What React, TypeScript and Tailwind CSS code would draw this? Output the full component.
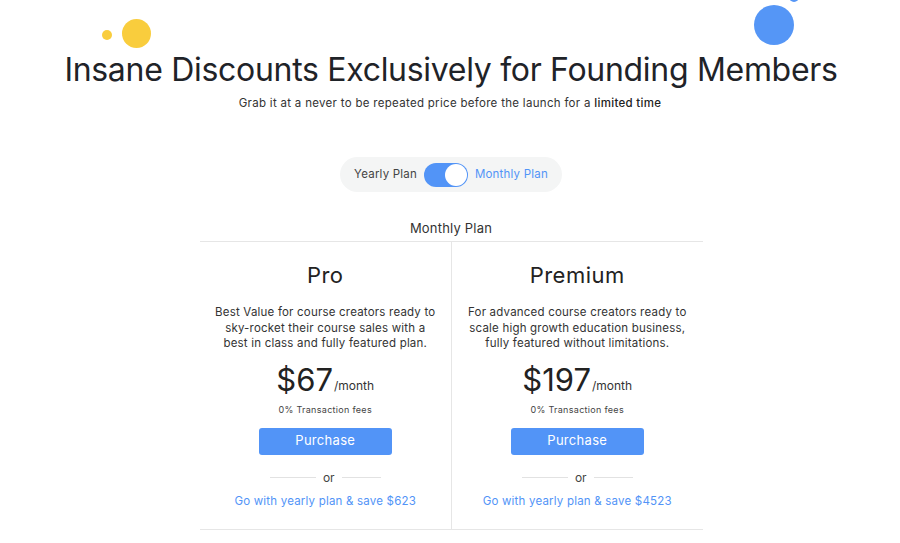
import React from "react";

const font = { fontFamily: "Inter, 'Noto Sans', sans-serif" };

function Plan({
  name,
  desc,
  price,
  save,
}: {
  name: string;
  desc: string[];
  price: string;
  save: string;
}) {
  return (
    <div className="flex flex-col items-center pt-[19px] pb-[20px]">
      <div className="text-[22px] leading-[28px] text-[#222] tracking-[0.5px]">{name}</div>
      <div className="mt-[16px] flex flex-col items-center text-[11.5px] leading-[15.5px] text-[#333] tracking-[0.2px]">
        {desc.map((d) => (
          <div key={d}>{d}</div>
        ))}
      </div>
      <div className="mt-[10px] flex items-end text-[#222] h-[36px]">
        <span className="text-[31px] leading-[36px]">{price}</span>
        <span className="text-[12px] leading-[14px] mb-[5px] ml-[1px] text-[#333]">/month</span>
      </div>
      <div className="mt-[6px] text-[9px] leading-[12px] text-[#444] tracking-[0.3px]">0% Transaction fees</div>
      <button className="mt-[12px] w-[133px] h-[27px] rounded-[3px] bg-[#5294f7] text-white text-[13px] tracking-[0.3px]">
        Purchase
      </button>
      <div className="mt-[16px] flex items-center gap-[7px] h-[14px]">
        <div className="w-[46px] h-px bg-[#e2e2e2]" />
        <span className="text-[12px] leading-[14px] text-[#444]">or</span>
        <div className="w-[39px] h-px bg-[#e2e2e2]" />
      </div>
      <div className="mt-[8px] text-[11.5px] leading-[16px] text-[#5294f7] tracking-[0.2px]">{save}</div>
    </div>
  );
}

export default function App() {
  return (
    <div className="relative w-full h-[543px] overflow-hidden bg-white" style={font}>
      <div className="absolute left-[102px] top-[30px] w-[10px] h-[10px] rounded-full bg-[#f9cd3d]" />
      <div className="absolute left-[122px] top-[19px] w-[29px] h-[29px] rounded-full bg-[#f9cd3d]" />
      <div className="absolute left-[754px] top-[5px] w-[40px] h-[40px] rounded-full bg-[#5596f6]" />
      <div className="absolute left-[789px] top-[-8px] w-[10px] h-[10px] rounded-full bg-[#5596f6]" />

      <div className="flex flex-col items-center">
        <h1 className="mt-[48px] text-[32px] leading-[44px] text-[#1f2328] tracking-[-0.3px] ml-[2px]">
          Insane Discounts Exclusively for Founding Members
        </h1>
        <p className="mt-[3px] text-[11.5px] leading-[16px] text-[#333] tracking-[0.3px]">
          Grab it at a never to be repeated price before the launch for a{" "}
          <span className="font-medium text-[#222]">limited time</span>
        </p>

        <div className="mt-[46px] flex items-center h-[35px] rounded-full bg-[#f4f5f5] pl-[14px] pr-[14px] ml-[2px]">
          <span className="text-[11.5px] text-[#444] tracking-[0.2px]">Yearly Plan</span>
          <div className="ml-[7px] w-[44px] h-[24px] rounded-full bg-[#5294f7] flex items-center justify-end pr-[1px]">
            <div className="w-[22px] h-[22px] rounded-full bg-white" />
          </div>
          <span className="ml-[7px] text-[11.5px] text-[#5294f7] tracking-[0.2px]">Monthly Plan</span>
        </div>

        <div className="mt-[27px] text-[13px] leading-[18px] text-[#333] tracking-[0.2px] ml-[2px]">Monthly Plan</div>

        <div className="mt-[4px] w-[503px] ml-[3px] border-t border-b border-[#e6e6e6] grid grid-cols-2">
          <div className="border-r border-[#e6e6e6]">
            <Plan
              name="Pro"
              desc={[
                "Best Value for course creators ready to",
                "sky-rocket their course sales with a",
                "best in class and fully featured plan.",
              ]}
              price="$67"
              save="Go with yearly plan & save $623"
            />
          </div>
          <div>
            <Plan
              name="Premium"
              desc={[
                "For advanced course creators ready to",
                "scale high growth education business,",
                "fully featured without limitations.",
              ]}
              price="$197"
              save="Go with yearly plan & save $4523"
            />
          </div>
        </div>
      </div>
    </div>
  );
}
